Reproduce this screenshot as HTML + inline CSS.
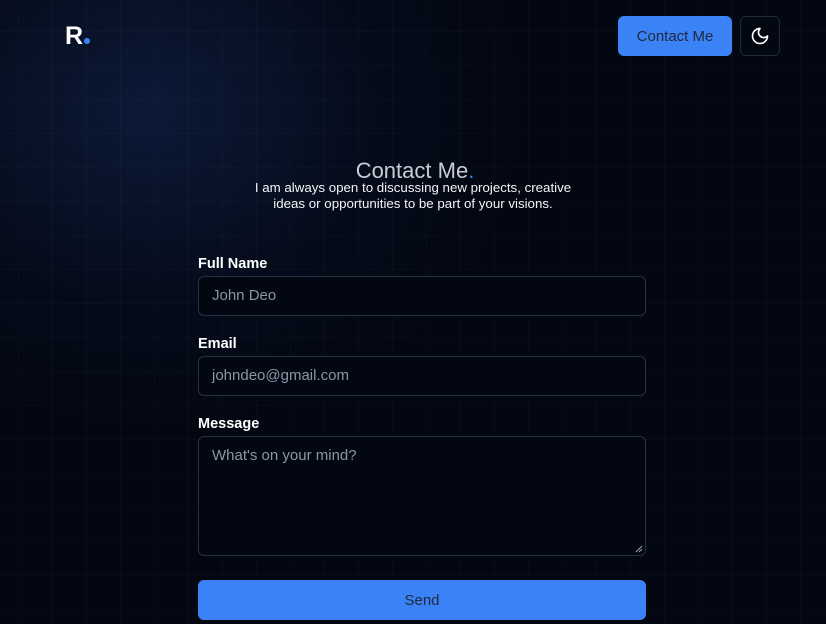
<!DOCTYPE html>
<html><head><style>
*{box-sizing:border-box;margin:0;padding:0}
html,body{width:826px;height:624px;overflow:hidden}
body{background:#030712;font-family:"Liberation Sans",sans-serif;position:relative;color:#fff}
.bg{position:absolute;inset:0;
background:
linear-gradient(rgba(255,255,255,0.02) 1px,transparent 1px) 0 31px/34px 34px,
linear-gradient(90deg,rgba(255,255,255,0.02) 1px,transparent 1px) 18px 0/34px 34px,
radial-gradient(ellipse 380px 320px at 150px 110px,rgba(18,38,80,0.6),rgba(10,22,50,0.25) 60%,transparent 100%);}
.logo{position:absolute;left:65px;top:22px;font-weight:bold;font-size:25px;color:#fff}
.logo span{display:inline-block;width:6px;height:6px;border-radius:50%;background:#3b82f6;margin-left:1px;vertical-align:baseline}
.btn{position:absolute;left:618px;top:16px;width:114px;height:40px;background:#3b82f6;border-radius:6px;color:#1e293b;font-size:15px;display:flex;align-items:center;justify-content:center}
.theme{position:absolute;left:740px;top:16px;width:40px;height:40px;border:1px solid #1f2937;border-radius:6px;background:#030712;display:flex;align-items:center;justify-content:center}
h1{position:absolute;top:158px;width:100%;text-align:center;font-weight:normal;font-size:22px;color:#c8ccd2;padding-left:4px}
h1 span{color:#3b82f6}
.sub{position:absolute;top:180px;width:100%;text-align:center;font-size:13.3px;line-height:16px;color:#f3f4f6}
label{position:absolute;left:198px;font-weight:bold;font-size:14.5px;color:#fff}
.in{position:absolute;left:198px;width:448px;border:1px solid #2a3140;border-radius:6px;background:#030712;color:#8a96a8;font-size:15px;padding:0 13px}
.send{position:absolute;left:198px;top:580px;width:448px;height:40px;background:#3b82f6;border-radius:6px;color:#1e293b;font-size:15px;display:flex;align-items:center;justify-content:center}
</style></head><body>
<div class="bg"></div>
<div class="logo">R<span></span></div>
<div class="btn">Contact Me</div>
<div class="theme"><svg width="20" height="20" viewBox="0 0 24 24" fill="none" stroke="#fff" stroke-width="2" stroke-linecap="round" stroke-linejoin="round"><path d="M12 3a6 6 0 0 0 9 9 9 9 0 1 1-9-9Z"/></svg></div>
<h1>Contact Me<span>.</span></h1>
<div class="sub">I am always open to discussing new projects, creative<br>ideas or opportunities to be part of your visions.</div>
<label style="top:256px">Full Name</label>
<div class="in" style="top:276px;height:40px;line-height:38px">John Deo</div>
<label style="top:336px">Email</label>
<div class="in" style="top:356px;height:40px;line-height:38px">johndeo@gmail.com</div>
<label style="top:416px">Message</label>
<div class="in" style="top:436px;height:120px;padding-top:9px;line-height:20px">What's on your mind?
<svg style="position:absolute;right:2px;bottom:2px" width="8" height="8" viewBox="0 0 8 8" stroke="#9ca3af" stroke-width="1"><path d="M1 7L7 1M4 7L7 4"/></svg></div>
<div class="send">Send</div>
</body></html>
